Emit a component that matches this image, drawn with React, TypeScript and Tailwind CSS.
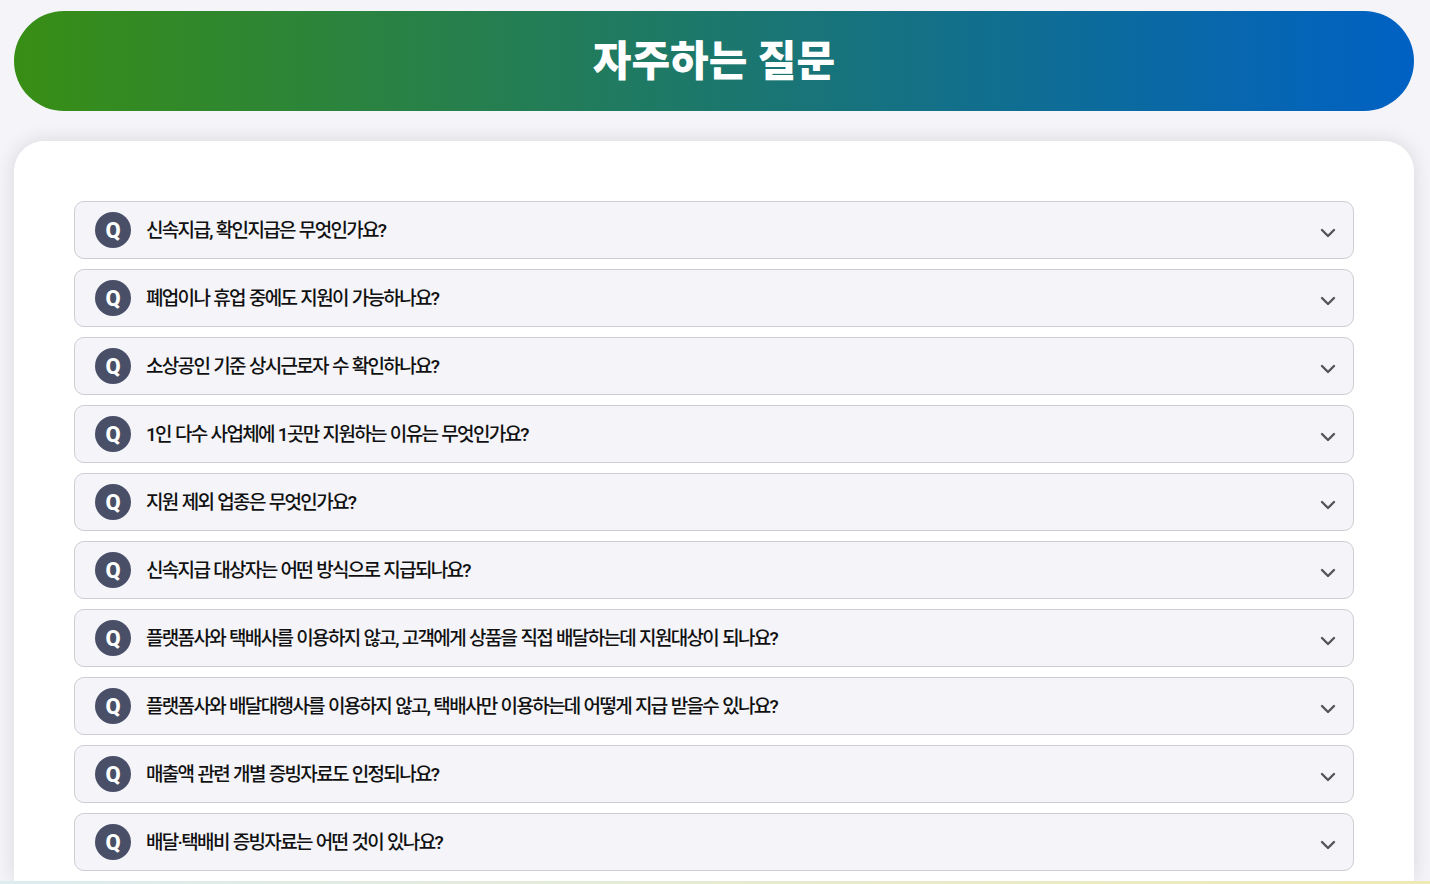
import { ChevronDown } from "lucide-react";

const questions = [
  "신속지급, 확인지급은 무엇인가요?",
  "폐업이나 휴업 중에도 지원이 가능하나요?",
  "소상공인 기준 상시근로자 수 확인하나요?",
  "1인 다수 사업체에 1곳만 지원하는 이유는 무엇인가요?",
  "지원 제외 업종은 무엇인가요?",
  "신속지급 대상자는 어떤 방식으로 지급되나요?",
  "플랫폼사와 택배사를 이용하지 않고, 고객에게 상품을 직접 배달하는데 지원대상이 되나요?",
  "플랫폼사와 배달대행사를 이용하지 않고, 택배사만 이용하는데 어떻게 지급 받을수 있나요?",
  "매출액 관련 개별 증빙자료도 인정되나요?",
  "배달·택배비 증빙자료는 어떤 것이 있나요?",
];

function FaqRow({ question }: { question: string }) {
  return (
    <div className="flex h-[58px] items-center rounded-[10px] border border-[#cdcdd2] bg-[#f4f4f9] pl-5 pr-[13px]">
      <span className="flex h-9 w-9 shrink-0 items-center justify-center rounded-full bg-[#4a4f68] text-[22px] font-extrabold text-white">
        Q
      </span>
      <p className="ml-[15px] flex-1 pt-[2px] text-[19px] font-medium tracking-[-1.68px] text-[#111] [word-spacing:1px]">{question}</p>
      <ChevronDown className="mt-[5px] h-6 w-6 text-[#555]" strokeWidth={2.4} />
    </div>
  );
}

export default function App() {
  return (
    <div className="flex h-[884px] flex-col overflow-hidden bg-[#f4f4f9] pt-[11px] font-['Roboto','Noto_Sans_CJK_KR',sans-serif]">
      <header className="ml-[14px] mr-[16px] flex h-[100px] shrink-0 items-center justify-center rounded-full bg-linear-to-r/srgb from-[#388e14] to-[#0061c4]">
        <h1 className="text-[42px] font-extrabold text-white">자주하는 질문</h1>
      </header>

      <main className="ml-[14px] mr-[16px] mt-[30px] h-[740px] shrink-0 overflow-hidden rounded-t-[30px] bg-white px-[60px] pt-[60px] shadow-[0_0_20px_rgba(0,0,0,0.12)]">
        <div className="flex flex-col gap-[10px]">
          {questions.map((question) => (
            <FaqRow key={question} question={question} />
          ))}
        </div>
      </main>

      <div className="relative h-[3px] shrink-0 bg-linear-to-r/srgb from-[#dcecf0] to-[#efe9b4]" />
    </div>
  );
}
